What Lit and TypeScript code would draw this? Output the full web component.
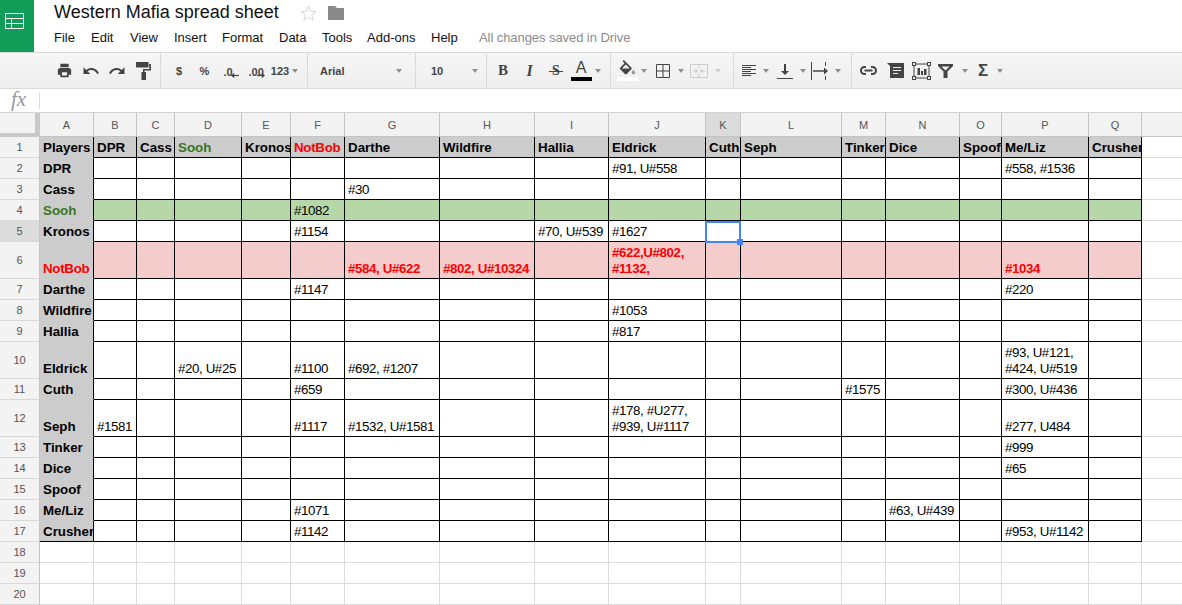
import { LitElement, html, css, svg, nothing } from "lit";
import { customElement } from "lit/decorators.js";

const COLS = [
  ["A", 54], ["B", 43], ["C", 38], ["D", 67], ["E", 49], ["F", 54], ["G", 95], ["H", 95], ["I", 74],
  ["J", 97], ["K", 35], ["L", 101], ["M", 44], ["N", 74], ["O", 42], ["P", 87], ["Q", 53],
] as [string, number][];
const HEAD = ["Players", "DPR", "Cass", "Sooh", "Kronos", "NotBob", "Darthe", "Wildfire", "Hallia", "Eldrick", "Cuth", "Seph", "Tinker", "Dice", "Spoof", "Me/Liz", "Crusher"];
const TALL = new Set([6, 10, 12]);
const DATA: Record<number, Record<string, string>> = {
  2: { J: "#91, U#558", P: "#558, #1536" },
  3: { G: "#30" },
  4: { F: "#1082" },
  5: { F: "#1154", I: "#70, U#539", J: "#1627" },
  6: { G: "#584, U#622", H: "#802, U#10324", J: "#622,U#802, #1132,", P: "#1034" },
  7: { F: "#1147", P: "#220" },
  8: { J: "#1053" },
  9: { J: "#817" },
  10: { D: "#20, U#25", F: "#1100", G: "#692, #1207", P: "#93, U#121, #424, U#519" },
  11: { F: "#659", M: "#1575", P: "#300, U#436" },
  12: { B: "#1581", F: "#1117", G: "#1532, U#1581", J: "#178, #U277, #939, U#1117", P: "#277, U484" },
  13: { P: "#999" },
  14: { P: "#65" },
  16: { F: "#1071", N: "#63, U#439" },
  17: { F: "#1142", P: "#953, U#1142" },
};
const MENUS: [string, number][] = [["File", 37], ["Edit", 39], ["View", 44], ["Insert", 48], ["Format", 57], ["Data", 43], ["Tools", 45], ["Add-ons", 64], ["Help", 48]];

const ic = (w: number, h: number, vb: string, body: unknown) =>
  html`<svg width=${w} height=${h} viewBox=${vb}>${body}</svg>`;
const D = "#444";
const ICONS = {
  print: ic(15, 15, "0 0 18 18", svg`<path fill=${D} fill-rule="evenodd" d="M4 1h10v4H4zM1 9a3 3 0 0 1 3-3h10a3 3 0 0 1 3 3v5h-3v3H4v-3H1zM6 11v4h6v-4z"/>`),
  undo: ic(18, 18, "0 0 24 24", svg`<path fill=${D} d="M12.5 8c-2.65 0-5.05.99-6.9 2.6L2 7v9h9l-3.62-3.62c1.39-1.16 3.16-1.88 5.12-1.88 3.54 0 6.55 2.31 7.6 5.5l2.37-.78C21.08 11.03 17.15 8 12.5 8z"/>`),
  redo: ic(18, 18, "0 0 24 24", svg`<path fill=${D} d="M18.4 10.6C16.55 8.99 14.15 8 11.5 8c-4.65 0-8.58 3.03-9.96 7.22L3.9 16c1.05-3.19 4.05-5.5 7.6-5.5 1.95 0 3.73.72 5.12 1.88L13 16h9V7l-3.6 3.6z"/>`),
  roller: ic(15, 18, "0 0 15 18", svg`<path fill=${D} d="M0 0h12.5v5.500H0zM13 2h2v6.500H8.500V10H10v8H5.500v-8h1.500V7h6.500z"/>`),
  fill: ic(17, 16, "2 0 20 19", svg`<path fill=${D} d="M16.56 8.94L7.62 0 6.21 1.41l2.38 2.38-5.15 5.15c-.59.59-.59 1.54 0 2.12l5.5 5.5c.29.29.68.44 1.06.44s.77-.15 1.06-.44l5.5-5.5c.59-.58.59-1.53 0-2.12zM5.21 10L10 5.21 14.79 10H5.21z"/><path fill="#999" d="M19 11.5s-2 2.17-2 3.5c0 1.1.9 2 2 2s2-.9 2-2c0-1.33-2-3.5-2-3.5z"/>`),
  borders: ic(14, 14, "0 0 14 14", svg`<path fill="none" stroke=${D} d="M.5.5h13v13H.5zM7 .5v13M.5 7h13"/>`),
  merge: ic(18, 14, "0 0 18 14", svg`<path fill="none" stroke="#ccc" d="M.5.5h17v13H.5zM9 .5v4M9 9.500v4M3 7h4M15 7h-4"/><path fill="#ccc" d="M8 7L5.500 4.500v5zM10 7l2.500-2.500v5z"/>`),
  align: ic(14, 11, "0 0 14 11", svg`<path stroke=${D} d="M0 .5h14M0 2.500h9M0 4.500h14M0 6.500h9M0 8.500h14M0 10.500h9"/>`),
  valign: ic(16, 16, "0 0 16 16", svg`<path stroke=${D} stroke-width="1" d="M0 15.500h16"/><path fill=${D} d="M7 1h2v7h3l-4 4-4-4h3z"/>`),
  wrap: ic(19, 18, "0 0 19 18", svg`<path stroke=${D} d="M.5 0v18"/><path stroke=${D} stroke-width="1.500" d="M2 9h12"/><path fill=${D} d="M13 5.500L17 9l-4 3.500z"/><path stroke=${D} d="M14.500 0v4M14.500 14v4"/>`),
  link: ic(17, 9, "0 0 17 9", svg`<path fill="none" stroke=${D} stroke-width="2" d="M6 1H4.500a3.500 3.500 0 0 0 0 7H6M11 1h1.500a3.500 3.500 0 0 1 0 7H11"/><path stroke=${D} stroke-width="2" d="M4.500 4.500h8"/>`),
  comment: ic(17, 15, "0 0 17 15", svg`<path fill=${D} d="M0 0h17v15H3V3z"/><path stroke="#eee" d="M6 4.500h8M6 7.500h8M6 10.500h5"/>`),
  chart: ic(19, 18, "0 0 19 18", svg`<rect x="2" y="2" width="15" height="14" fill="none" stroke=${D}/><rect x=".5" y=".5" width="3" height="3" fill="#eee" stroke=${D}/><rect x="15.500" y=".5" width="3" height="3" fill="#eee" stroke=${D}/><rect x=".5" y="14.500" width="3" height="3" fill="#eee" stroke=${D}/><rect x="15.500" y="14.500" width="3" height="3" fill="#eee" stroke=${D}/><path fill=${D} d="M5.500 6h2.500v7H5.500zM9 9h2v4H9zM12 7h2.500v6H12z"/>`),
  filter: ic(15, 15, "0 0 15 15", svg`<path fill=${D} fill-rule="evenodd" d="M0 1h15v2L9.500 8.500V15h-4V8.500L0 3zM3.500 3.500l4 4 4-4z"/>`),
  left: ic(8, 7, "0 0 10 7", svg`<path stroke=${D} stroke-width="1.500" d="M3 3.500h7"/><path fill=${D} d="M4 0v7L0 3.500z"/>`),
  right: ic(8, 7, "0 0 10 7", svg`<path stroke=${D} stroke-width="1.500" d="M0 3.500h7"/><path fill=${D} d="M6 0v7l4-3.500z"/>`),
  star: ic(17, 16, "0 0 17 16", svg`<path fill="#fff" stroke="#d6d6d6" d="M8.500 1l2 5.200 5.500.3-4.300 3.500 1.500 5.300-4.700-3-4.700 3 1.500-5.300L1 6.500l5.500-.3z"/>`),
  folder: ic(16, 14, "0 0 16 14", svg`<path fill="#8a8a8a" d="M0 0h7l2 2h7v12H0z"/>`),
  sheet: ic(19, 16, "0 0 19 16", svg`<path fill="none" stroke="#fff" d="M.5.5h18v15H.5zM.5 5.500h18M.5 10.500h18M6.500 5.500v10"/>`),
};

const CARET = Symbol("caret");
const LIGHT = Symbol("light");
const GROUPS: { w: number; pad: number; items: [number, unknown][] }[] = [
  { w: 161, pad: 51, items: [[26, ICONS.print], [27, ICONS.undo], [26, ICONS.redo], [26, ICONS.roller]] },
  {
    w: 147, pad: 5, items: [
      [26, html`<b class="t">$</b>`], [25, html`<b class="t">%</b>`],
      [28, html`<span class="dec one"><b class="t">.0</b><span class="arr">${ICONS.left}</span></span>`],
      [23, html`<span class="dec two"><b class="t">.00</b><span class="arr">${ICONS.right}</span></span>`],
      [24, html`<b class="t">123</b>`], [6, CARET],
    ],
  },
  { w: 108, pad: 12, items: [[75, html`<b class="t lab">Arial</b>`], [7, CARET]] },
  { w: 71, pad: 15, items: [[40, html`<b class="t lab">10</b>`], [7, CARET]] },
  {
    w: 124, pad: 3, items: [
      [26, html`<span class="b">B</span>`], [27, html`<span class="i">I</span>`], [26, html`<span class="s">S</span>`],
      [24, html`<span class="a">A<span class="bar"></span></span>`], [10, CARET],
    ],
  },
  {
    w: 123, pad: 4, items: [
      [24, html`<span class="a">${ICONS.fill}<span class="bar white"></span></span>`], [10, CARET], [27, ICONS.borders], [9, CARET],
      [28, ICONS.merge], [10, LIGHT],
    ],
  },
  {
    w: 118, pad: 2, items: [[26, ICONS.align], [8, CARET], [29, ICONS.valign], [8, CARET], [27, ICONS.wrap], [8, CARET]],
  },
  {
    w: 160, pad: 3, items: [[26, ICONS.link], [28, ICONS.comment], [24, ICONS.chart], [24, ICONS.filter], [16, CARET], [20, html`<span class="sig">Σ</span>`], [14, CARET]],
  },
];

@customElement("app-root")
export class AppRoot extends LitElement {
  static styles = css`
    :host { display: block; width: 1182px; height: 605px; overflow: hidden; background: #fff; font-family: "Liberation Sans", Arial, sans-serif; color: #000; }
    .top { display: flex; height: 52px; border-bottom: 1px solid #dadada; }
    .logo { width: 34px; background: #119d58; display: flex; align-items: flex-start; padding: 13px 0 0 5px; box-sizing: border-box; }
    .titles { padding: 0 0 0 20px; }
    .titleline { display: flex; align-items: center; height: 25px; }
    .title { font-size: 18px; line-height: 25px; color: #111; width: 246px; }
    .star { width: 28px; display: flex; }
    .folder { display: flex; }
    .menu { display: flex; align-items: center; font-size: 13px; line-height: 16px; margin-top: 5px; color: #111; }
    .saved { color: #8c8c8c; letter-spacing: -0.07px; }
    .toolbar { display: flex; height: 35px; background: linear-gradient(#f6f6f6, #eeeeee); border-bottom: 1px solid #dadada; }
    .group { display: flex; align-items: center; box-sizing: border-box; border-right: 1px solid #d9d9d9; flex: none; }
    .group:last-child { border-right: 0; }
    .item { display: flex; align-items: center; justify-content: center; height: 35px; flex: none; }
    .t { font-size: 11px; color: #444; font-weight: 700; line-height: 14px; }
    .lab { width: 100%; }
    .dec { position: relative; display: block; }
    .dec.one { width: 15px; }
    .dec.two { width: 16px; }
    .arr { position: absolute; top: 10px; right: 0; display: flex; }
    .caret { width: 0; height: 0; border-left: 3.5px solid transparent; border-right: 3.5px solid transparent; border-top: 4px solid #8f8f8f; margin-top: 1px; }
    .caret.light { border-top-color: #cfcfcf; }
    .b { font: 700 15px "Liberation Serif", serif; color: #444; }
    .i { font: italic 700 16px "Liberation Serif", serif; color: #444; }
    .s { font: 700 14px "Liberation Serif", serif; color: #444; position: relative; padding: 0 3px; }
    .s::after { content: ""; position: absolute; left: 0; right: 0; top: 8px; height: 1px; background: #444; }
    .a { display: flex; flex-direction: column; align-items: center; font-size: 16px; line-height: 16px; color: #444; width: 21px; }
    .bar { display: block; width: 21px; height: 4px; background: #000; margin-top: 1px; }
    .bar.white { background: #fff; }
    .sig { font: 700 17px "Liberation Sans", sans-serif; color: #444; }
    .fx { display: flex; height: 23px; border-bottom: 1px solid #d4d4d4; }
    .fxlabel { width: 39px; padding-left: 11px; box-sizing: border-box; font: italic 400 21px/21px "Liberation Serif", serif; color: #999; }
    .fxsep { width: 1px; height: 17px; margin-top: 3px; background: #dcdcdc; }
    .sheet { display: grid; }
    .corner { background: #f3f3f3; border-right: 5px solid #c9c9c9; border-bottom: 4px solid #c9c9c9; box-sizing: border-box; }
    .ch { background: #f3f3f3; border-right: 1px solid #c4c4c4; border-bottom: 1px solid #c4c4c4; box-sizing: border-box; font-size: 11px; color: #555; display: flex; align-items: center; justify-content: center; padding-top: 1px; }
    .ch.sel { background: #dcdcdc; }
    .ch.blank { border-right: 0; }
    .rh { background: #f3f3f3; border-right: 1px solid #c4c4c4; border-bottom: 1px solid #d8d8d8; box-sizing: border-box; font-size: 11px; color: #555; display: flex; align-items: center; justify-content: center; }
    .rh.sel { background: #dcdcdc; }
    .c { box-sizing: border-box; border-right: 1px solid #000; border-bottom: 1px solid #000; padding: 0 0 1px 3px; font-size: 13.33px; line-height: 16px; overflow: hidden; display: flex; align-items: flex-end; letter-spacing: -0.4px; }
    .c.hdr, .c.lead { background: #ccc; font-weight: 700; letter-spacing: 0; }
    .c.lead { border-bottom-color: #ccc; }
    .c.hdr.first { border-bottom-color: #ccc; }
    .c.lead.last { border-bottom-color: #000; }
    .c.g { background: #b6d7a8; }
    .c.r { background: #f4cccc; font-weight: 700; color: #f00; }
    .c.green { color: #38761d; }
    .c.red { color: #f00; letter-spacing: -0.3px; }
    .e { box-sizing: border-box; border-right: 1px solid #dcdcdc; border-bottom: 1px solid #dcdcdc; }
    .e.end { border-right: 0; }
    .holder { position: relative; height: 493px; }
    .selbox { position: absolute; left: 705px; top: 108px; width: 36px; height: 22px; box-sizing: border-box; border: 2px solid #4285f4; pointer-events: none; }
    .handle { position: absolute; left: 737px; top: 126px; width: 6px; height: 6px; background: #4285f4; }
  `;

  private renderItem(it: [number, unknown]) {
    const [w, c] = it;
    const body = c === CARET ? html`<span class="caret"></span>` : c === LIGHT ? html`<span class="caret light"></span>` : c;
    return html`<span class="item" style="width:${w}px">${body}</span>`;
  }

  private renderCell(row: number, col: string, idx: number) {
    const colour = (name: string) => (name === "Sooh" ? "green" : name === "NotBob" ? "red" : "");
    if (row === 1) {
      return html`<div class="c hdr ${idx === 0 ? "first" : ""} ${colour(HEAD[idx])}">${HEAD[idx]}</div>`;
    }
    if (idx === 0) {
      const name = HEAD[row - 1] ?? "";
      return html`<div class="c lead ${colour(name)} ${row === 17 ? "last" : ""}">${name}</div>`;
    }
    const cls = row === 4 ? "g" : row === 6 ? "r" : "";
    return html`<div class="c ${cls}">${DATA[row]?.[col] ?? nothing}</div>`;
  }

  render() {
    const rows = Array.from({ length: 20 }, (_, i) => i + 1);
    const colTemplate = `40px ${COLS.map((c) => c[1] + "px").join(" ")} 40px`;
    const rowTemplate = `24px ${rows.map((r) => (TALL.has(r) ? 37 : 21) + "px").join(" ")}`;
    return html`
      <div class="top">
        <div class="logo">${ICONS.sheet}</div>
        <div class="titles">
          <div class="titleline">
            <span class="title">Western Mafia spread sheet</span>
            <span class="star">${ICONS.star}</span>
            <span class="folder">${ICONS.folder}</span>
          </div>
          <div class="menu">
            ${MENUS.map(([m, w]) => html`<span style="width:${w}px">${m}</span>`)}
            <span class="saved">All changes saved in Drive</span>
          </div>
        </div>
      </div>
      <div class="toolbar">
        ${GROUPS.map(
          (g) => html`<div class="group" style="width:${g.w}px;padding-left:${g.pad}px">${g.items.map((it) => this.renderItem(it))}</div>`,
        )}
      </div>
      <div class="fx">
        <div class="fxlabel">fx</div>
        <div class="fxsep"></div>
      </div>
      <div class="holder">
        <div class="sheet" style="grid-template-columns:${colTemplate};grid-template-rows:${rowTemplate}">
          <div class="corner"></div>
          ${COLS.map(([n]) => html`<div class="ch ${n === "K" ? "sel" : ""}">${n}</div>`)}
          <div class="ch blank"></div>
          ${rows.map(
            (r) => html`
              <div class="rh ${r === 5 ? "sel" : ""}">${r}</div>
              ${COLS.map(([n], i) => (r <= 17 ? this.renderCell(r, n, i) : html`<div class="e"></div>`))}
              <div class="e end"></div>
            `,
          )}
        </div>
        <div class="selbox"></div>
        <div class="handle"></div>
      </div>
    `;
  }
}
